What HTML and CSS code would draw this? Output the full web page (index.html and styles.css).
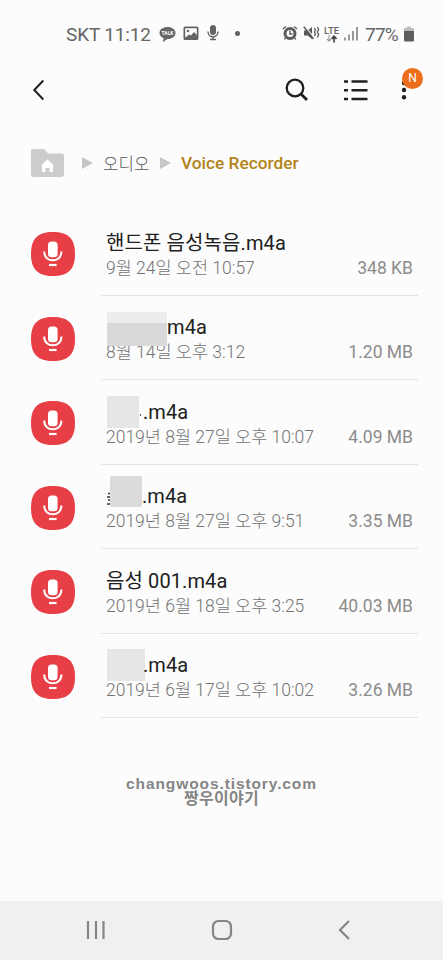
FILE: index.html
```html
<!DOCTYPE html>
<html lang="ko">
<head>
<meta charset="utf-8">
<title>Voice Recorder</title>
<link rel="stylesheet" href="styles.css">
</head>
<body>
<svg class="defs" width="0" height="0" aria-hidden="true">
  <symbol id="mic" viewBox="0 0 44 44">
    <path d="M22 0C37 0 44 6.500 44 22S37 44 22 44 0 37.500 0 22 7 0 22 0Z" fill="#e83e46"/>
    <rect x="17" y="9.500" width="9.600" height="15.800" rx="3.500" fill="#fff"/>
    <path d="M13.200 19.500C13.200 31.300 30.400 31.300 30.400 19.500" fill="none" stroke="#fff" stroke-width="2"/>
    <path d="M18 33H25.600" stroke="#fff" stroke-width="2.200"/>
  </symbol>
</svg>
<header class="status">
  <span class="clock">SKT 11:12</span>
  <svg class="talk" width="17" height="17" viewBox="0 0 17 17"><path d="M8.500 1C13 1 16.500 3.500 16.500 7S13 13 8.500 13L4 16 4.600 12.200C2 11.200.5 9.300.5 7 .5 3.500 4 1 8.500 1Z" fill="#666"/><text x="8.500" y="9" text-anchor="middle">TALK</text></svg>
  <svg class="photo" width="16" height="15" viewBox="0 0 16 15"><path fill="#636363" fill-rule="evenodd" d="M2 .5H14Q15.500.5 15.500 2V12.500Q15.500 14 14 14H2Q.5 14 .5 12.500V2Q.5.500 2 .5ZM2.200 2.200V11.500H13.800V2.200Z"/><circle cx="5" cy="5" r="1.200" fill="#636363"/><path d="M2.500 11.500 6 8.500 8 9.500 11 6 14 9V12H2.500Z" fill="#636363"/></svg>
  <svg class="smallmic" width="12" height="16" viewBox="0 0 12 16"><rect x="3" y="0" width="6" height="10" rx="3" fill="#636363"/><path d="M1 6.500C1 13.500 11 13.500 11 6.500M6 11.500V15M3 14.500H9" fill="none" stroke="#636363" stroke-width="1.400"/></svg>
  <i class="dot"></i>
  <svg class="alarm" width="16" height="16" viewBox="0 0 16 16"><circle cx="8" cy="8.500" r="5" fill="none" stroke="#5b5b5b" stroke-width="3"/><path d="M1 4 4 1.500M15 4 12 1.500M3.500 12.500 2.500 14.500M12.500 12.500 13.500 14.500M8 5.500V9H10.500" stroke="#5b5b5b" stroke-width="1.400" fill="none"/></svg>
  <svg class="mute" width="17" height="16" viewBox="0 0 17 16"><path d="M1 5.500H4.500L9 2V14L4.500 10.500H1Z" fill="#5b5b5b"/><path d="M1.800 1.200 11.500 13.200" stroke="#fcfcfc" stroke-width="1.200"/><path d="M.8 1.800 10.500 14" stroke="#5b5b5b" stroke-width="1.500"/><path d="M11.300 3 12.500 5 11.300 7 12.500 9 11.300 11M14.600 2 15.600 4.500 14.400 7 15.600 9.500 14.500 12.500" fill="none" stroke="#5b5b5b" stroke-width="1.300"/></svg>
  <span class="lte">LTE<svg width="13" height="8" viewBox="0 0 13 8"><path d="M4 0V6M1.800 3.800 4 6.200 6.200 3.800" fill="none" stroke="#999" stroke-width="1.100"/><path d="M9 7.500V2M6.500 3.800 9 1.200 11.500 3.800" fill="none" stroke="#444" stroke-width="1.700"/></svg></span>
  <svg class="signal" width="14" height="15" viewBox="0 0 14 15"><path d="M1 11.500V14.500M5 8.500V14.500M9 5V14.500M13 1V14.500" stroke="#777" stroke-width="1.500"/></svg>
  <span class="percent">77%</span>
  <svg class="battery" width="10" height="16" viewBox="0 0 10 16"><path d="M3 .5H7V2H10V5H0V2H3Z" fill="#bcbcbc"/><path d="M0 5H10V14.500Q10 15.500 9 15.500H1Q0 15.500 0 14.500Z" fill="#5e5e5e"/></svg>
</header>
<nav class="toolbar">
  <svg class="back" width="12" height="22" viewBox="0 0 12 22"><path d="M11.300 1.500 2.300 11 11.300 20.500" fill="none" stroke="#202020" stroke-width="2"/></svg>
  <svg class="search" width="24" height="24" viewBox="0 0 24 24"><circle cx="10" cy="10" r="8.300" fill="none" stroke="#202020" stroke-width="2.300"/><path d="M16 16 22 22" stroke="#202020" stroke-width="2.800"/></svg>
  <svg class="list" width="24" height="22" viewBox="0 0 24 22"><path d="M0 2.500H4M7.500 2.500H23.500M0 11.300H4M7.500 11.300H23.500M0 20H4M7.500 20H23.500" stroke="#202020" stroke-width="2.600"/></svg>
  <div class="more"><svg width="6" height="20" viewBox="0 0 6 20"><g fill="#202020"><circle cx="3" cy="3" r="2.200"/><circle cx="3" cy="10" r="2.200"/><circle cx="3" cy="17.200" r="2.200"/></g></svg><b class="badge">N</b></div>
</nav>
<div class="crumbs">
  <svg class="folder" width="33" height="28" viewBox="0 0 33 28"><path d="M2 0H13L17 4.500H30.500Q33 4.500 33 7V25.500Q33 28 30.500 28H2.500Q0 28 0 25.500V2Q0 0 2 0Z" fill="#ccc"/><path d="M16.500 10.500 23 16.500H22V23H18.500V19H14.500V23H11V16.500H10Z" fill="#fff"/></svg>
  <svg class="arrow" width="11" height="12" viewBox="0 0 11 12"><path d="M0 0 11 6 0 12Z" fill="#c6c6c6"/></svg>
  <span class="audio">오디오</span>
  <svg class="arrow" width="11" height="12" viewBox="0 0 11 12"><path d="M0 0 11 6 0 12Z" fill="#c6c6c6"/></svg>
  <span class="current">Voice Recorder</span>
</div>
<main class="files">
  <article class="file"><svg class="icon"><use href="#mic"/></svg><div class="info"><h2><span>핸드폰 음성녹음.m4a</span></h2><p><span>9월 24일 오전 10:57</span><span class="size">348 KB</span></p></div></article>
  <article class="file"><svg class="icon"><use href="#mic"/></svg><div class="info"><h2><i class="mask wide"></i><span>m4a</span></h2><p><span>8월 14일 오후 3:12</span><span class="size">1.20 MB</span></p></div></article>
  <article class="file"><svg class="icon"><use href="#mic"/></svg><div class="info"><h2><i class="mask third"></i><i class="speck"></i><span>.m4a</span></h2><p><span>2019년 8월 27일 오후 10:07</span><span class="size">4.09 MB</span></p></div></article>
  <article class="file"><svg class="icon"><use href="#mic"/></svg><div class="info"><h2><svg class="sliver" width="4" height="15" viewBox="0 0 4 15"><path d="M2 2.500H4M1 6H4M2 9H4M1 13H4" stroke="#333" stroke-width="1.300"/></svg><i class="mask fourth"></i><span>.m4a</span></h2><p><span>2019년 8월 27일 오후 9:51</span><span class="size">3.35 MB</span></p></div></article>
  <article class="file"><svg class="icon"><use href="#mic"/></svg><div class="info"><h2><span>음성 001.m4a</span></h2><p><span>2019년 6월 18일 오후 3:25</span><span class="size">40.03 MB</span></p></div></article>
  <article class="file"><svg class="icon"><use href="#mic"/></svg><div class="info"><h2><i class="mask sixth"></i><span>.m4a</span></h2><p><span>2019년 6월 17일 오후 10:02</span><span class="size">3.26 MB</span></p></div></article>
</main>
<footer class="credit"><div class="site">changwoos.tistory.com</div><div class="author">짱우이야기</div></footer>
<nav class="system">
  <svg width="20" height="20" viewBox="0 0 20 20"><path d="M2 1V19M10 1V19M17.500 1V19" stroke="#858585" stroke-width="2.200"/></svg>
  <svg width="22" height="22" viewBox="0 0 22 22"><rect x="2" y="2" width="18" height="18" rx="5.500" fill="none" stroke="#858585" stroke-width="2.200"/></svg>
  <svg width="12" height="20" viewBox="0 0 12 20"><path d="M11 1 2 10 11 19" fill="none" stroke="#858585" stroke-width="2.200"/></svg>
</nav>
</body>
</html>
```

FILE: styles.css
```css
* { box-sizing: border-box; }
body {
  margin: 0; width: 443px; height: 960px; overflow: hidden;
  display: flex; flex-direction: column;
  background: #fcfcfc; color: #202020;
  font-family: Roboto, "Noto Sans CJK KR", sans-serif;
}
svg { display: block; flex: none; }
.defs { position: absolute; }
.status { height: 60px; padding: 19px 0 11px 66px; display: flex; align-items: center; color: #666; white-space: nowrap; }
.clock { width: 93px; font-size: 19px; letter-spacing: -.15px; }
.talk { margin-top: 1px; }
.talk text { font: bold 5px Roboto, sans-serif; fill: #fff; }
.photo { margin: -2px 0 0 7px; }
.smallmic { margin: -2px 0 0 8px; }
.dot { width: 5px; height: 5px; margin: -1px 0 0 16px; border-radius: 50%; background: #636363; }
.alarm { margin: -2px 0 0 42px; }
.mute { margin: -2px 0 0 5px; }
.lte { width: 16px; margin-left: 4px; font-size: 9.5px; line-height: 9px; font-weight: 500; }
.lte svg { margin-left: 1px; }
.signal { margin: -1px 0 0 4px; }
.percent { width: 39px; margin-left: 7px; font-size: 19px; letter-spacing: -.8px; }
.battery { margin-top: -1px; }
.toolbar { height: 60px; padding-left: 32px; display: flex; align-items: center; }
.search { margin-left: 241px; }
.list { margin-left: 35px; }
.more { position: relative; margin-left: 33px; }
.badge { position: absolute; left: 1px; top: -12px; width: 21px; height: 21px; border-radius: 50%; background: #ed6c1b; color: #fff; font-size: 12px; font-weight: 400; line-height: 21px; text-align: center; }
.crumbs { height: 91px; padding: 0 0 6px 31px; display: flex; align-items: center; white-space: nowrap; }
.folder { margin-right: 18px; }
.audio { width: 57px; margin: 0 10px 0 0; padding-left: 10px; font-size: 16.8px; color: #555; font-weight: 300; }
.current { margin-left: 10px; font-size: 17.3px; font-weight: 500; color: #b38319; }
.files { flex: none; }
.file { height: 84.5px; display: flex; padding-left: 31px; }
.icon { width: 44px; height: 44px; margin: 21px 26px 0 0; }
.info { width: 317px; padding: 18.5px 5px 0; border-bottom: 1px solid #e4e4e4; white-space: nowrap; }
h2 { position: relative; display: flex; align-items: center; height: 26px; margin: 0; font-size: 20px; line-height: 26px; font-weight: 400; letter-spacing: .1px; }
p { display: flex; justify-content: space-between; margin: 0; height: 25px; line-height: 25px; font-size: 17.5px; font-weight: 300; color: #737373; }
.size { font-weight: 400; color: #8c8c8c; }
.mask { flex: none; background: #e6e6e6; }
.wide { width: 60px; height: 34px; margin: 3px 0 0 1px; background: linear-gradient(#ededed 0 32%, #d9d9d9 32%); }
.third { width: 32px; height: 32px; margin: 0 0 0 1px; }
.speck { width: 1px; height: 2px; margin: 6px 2px 0 1px; background: #555; }
.sliver { margin: 5px 0 0; }
.fourth { width: 32px; height: 31px; margin: -10px 0 0 0; background: #dbdbdb; border-radius: 2px; }
.sixth { width: 38px; height: 32px; margin-left: 1px; margin-right: -2px; }
.credit { margin-top: 58px; text-align: center; color: #858585; font: bold 15.5px/15px "Liberation Sans", "Noto Sans CJK KR", sans-serif; }
.site { letter-spacing: .9px; }
.author { font-size: 16px; letter-spacing: .3px; }
.system { height: 59px; margin-top: auto; padding: 0 93px 2px 86px; display: flex; justify-content: space-between; align-items: center; background: #f0f0f0; }
```
